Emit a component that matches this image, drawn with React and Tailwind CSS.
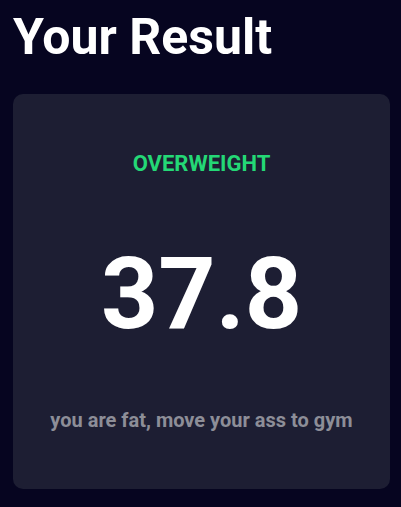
export default function App() {
  return (
    <div className="flex h-[507px] w-full flex-col bg-[#060520] font-['Roboto',sans-serif]">
      <h1 className="pl-[13px] pt-[8px] text-[50px] font-bold leading-[59px] text-white">Your Result</h1>
      <div className="mt-[27px] mb-[18px] ml-[13px] mr-[11px] flex flex-1 flex-col items-center justify-evenly rounded-[10px] bg-[#1d1e33]">
        <p className="text-[22px] font-bold leading-[26px] text-[#24d876]">OVERWEIGHT</p>
        <p className="text-[100px] font-bold leading-[117px] text-white">37.8</p>
        <p className="text-[20px] font-bold leading-[23px] text-[#8d8e98]">you are fat, move your ass to gym</p>
      </div>
    </div>
  )
}
